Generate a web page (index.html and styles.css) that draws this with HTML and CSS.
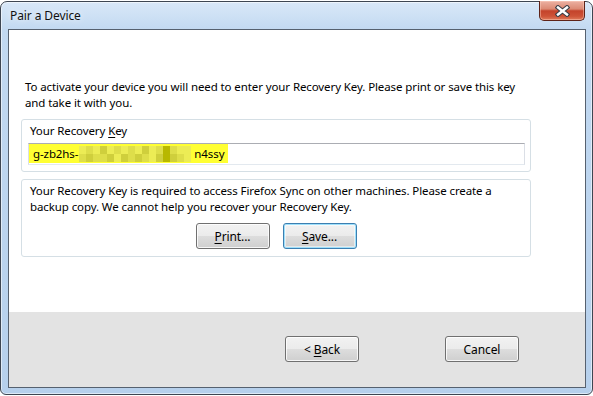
FILE: index.html
```html
<!DOCTYPE html>
<html lang="en">
<head>
  <meta charset="UTF-8">
  <title>Pair a Device</title>
  <link rel="stylesheet" href="styles.css">
</head>
<body>
  <div class="window">
    <div class="titlebar">
      <span class="title">Pair a Device</span>
      <button class="close-btn">
        <svg width="15" height="12" viewBox="0 0 15 12">
          <path d="M3 2.5 L12 9.5 M12 2.5 L3 9.5" stroke="#3a3f47" stroke-width="4.6" stroke-linecap="square"/>
          <path d="M3 2.5 L12 9.5 M12 2.5 L3 9.5" stroke="#fff" stroke-width="2.4" stroke-linecap="square"/>
        </svg>
      </button>
    </div>

    <div class="client">
      <div class="content">
        <p class="intro">To activate your device you will need to enter your Recovery Key. Please print or save this key and take it with you.</p>

        <div class="groupbox key-box">
          <label class="key-label">Your Recovery <u>K</u>ey</label>
          <div class="key-field">
            <span class="key-text">g-zb2hs-<span class="mosaic">
              <i class="c1"></i><i class="c2"></i><i class="c1"></i><i class="c3"></i><i class="c1"></i><i class="c2"></i><i class="c1"></i><i class="c2"></i><i class="c1"></i><i class="c3"></i><i class="c1"></i><i class="c2"></i><i class="c4"></i><i class="c2"></i><i class="c1"></i><i class="c1"></i>
              <i class="c2"></i><i class="c3"></i><i class="c2"></i><i class="c2"></i><i class="c3"></i><i class="c1"></i><i class="c3"></i><i class="c2"></i><i class="c3"></i><i class="c2"></i><i class="c1"></i><i class="c3"></i><i class="c4"></i><i class="c3"></i><i class="c2"></i><i class="c1"></i>
            </span>n4ssy</span>
          </div>
        </div>

        <div class="groupbox backup-box">
          <p>Your Recovery Key is required to access Firefox Sync on other machines. Please create a backup copy. We cannot help you recover your Recovery Key.</p>
          <div class="backup-actions">
            <button class="btn"><u>P</u>rint...</button>
            <button class="btn btn-default"><u>S</u>ave...</button>
          </div>
        </div>
      </div>

      <div class="footer">
        <button class="btn">&lt; <u>B</u>ack</button>
        <button class="btn">Cancel</button>
      </div>
    </div>
  </div>
</body>
</html>
```

FILE: styles.css
```css
* { margin: 0; padding: 0; box-sizing: border-box; }
body {
  background-color: #fff;
  color: #000;
  font-family: "Noto Sans", "Open Sans", sans-serif;
  font-size: 11.5px;
  letter-spacing: -0.1px;
}
u { text-decoration: underline; text-underline-offset: 2px; }

/* Window frame */
.window {
  margin-top: 1px;
  width: 593px;
  height: 394px;
  border: 1px solid #3e4652;
  border-radius: 7px 7px 6px 6px;
  background: linear-gradient(to bottom, #d9e8f8 0, #c2d9f1 28px, #b6d0ec 100%);
  box-shadow: inset 0 0 0 1px rgba(255, 255, 255, 0.55);
  padding: 0 6px 6px 7px;
  display: flex;
  flex-direction: column;
}
.titlebar {
  height: 27px;
  display: flex;
  justify-content: space-between;
  align-items: flex-start;
}
.title {
  padding-left: 2px;
  line-height: 28px;
  font-size: 12px;
  color: #111;
  text-shadow: 0 0 6px rgba(255, 255, 255, 0.9);
}
.close-btn {
  width: 46px;
  height: 20px;
  margin-top: -1px;
  margin-right: 1px;
  border: 1px solid #5e2318;
  border-top: none;
  border-radius: 0 0 5px 5px;
  background: linear-gradient(to bottom, #ecb1a2 0%, #dc8a74 42%, #c4432b 52%, #cd5337 80%, #e07c5c 100%);
  box-shadow: inset 0 0 0 1px rgba(255, 210, 195, 0.45);
  display: flex;
  align-items: center;
  justify-content: center;
}

/* Client area */
.client {
  flex: 1;
  border: 1px solid #56616f;
  background-color: #fff;
  display: flex;
  flex-direction: column;
}
.content {
  flex: 1;
  padding: 49px 54px 0 12px;
}
.intro {
  padding-left: 4px;
  line-height: 16px;
}

.groupbox {
  border: 1px solid #d5dfe5;
  border-radius: 3px;
}
.key-box {
  margin-top: 8px;
  padding: 3px 5px 6px 6px;
}
.key-label {
  display: block;
  padding-left: 2px;
  line-height: 16px;
}
.key-field {
  margin-top: 4px;
  height: 22px;
  border: 1px solid #dbdfe6;
  border-top-color: #abadb3;
  border-bottom-color: #e3e9ef;
  background-color: #fff;
}
.key-text {
  display: inline-flex;
  align-items: center;
  white-space: nowrap;
  width: 199px;
  height: 19px;
  padding-left: 4px;
  background-color: #ffff33;
  line-height: 19px;
}
.mosaic {
  display: grid;
  grid-template-columns: repeat(16, 7px);
  grid-auto-rows: 8px;
  margin: 0 3px 0 1px;
}
.mosaic i { display: block; }
.mosaic .c1 { background-color: #ecec55; }
.mosaic .c2 { background-color: #dede4a; }
.mosaic .c3 { background-color: #cfcf3c; }
.mosaic .c4 { background-color: #b8b800; }

.backup-box {
  margin-top: 7px;
  padding: 3px 8px 7px 8px;
}
.backup-box p { line-height: 16px; }
.backup-actions {
  margin-top: 8px;
  display: flex;
  justify-content: center;
  gap: 13px;
}

/* Buttons */
.btn {
  width: 74px;
  height: 26px;
  font-family: inherit;
  font-size: 12px;
  letter-spacing: inherit;
  color: #000;
  border: 1px solid #707070;
  border-radius: 3px;
  background: linear-gradient(to bottom, #f2f2f2 0%, #ebebeb 50%, #dddddd 51%, #cfcfcf 100%);
  box-shadow: inset 0 0 0 1px rgba(255, 255, 255, 0.8);
  cursor: pointer;
}
.btn-default {
  border-color: #3c7fb1;
  box-shadow: inset 0 0 0 1px #9fe0fb, inset 0 0 0 2px rgba(255, 255, 255, 0.5);
}

.footer {
  height: 75px;
  background-color: #e3e3e3;
  padding: 24px 66px 0 0;
  display: flex;
  justify-content: flex-end;
  align-items: flex-start;
  gap: 86px;
}
```
